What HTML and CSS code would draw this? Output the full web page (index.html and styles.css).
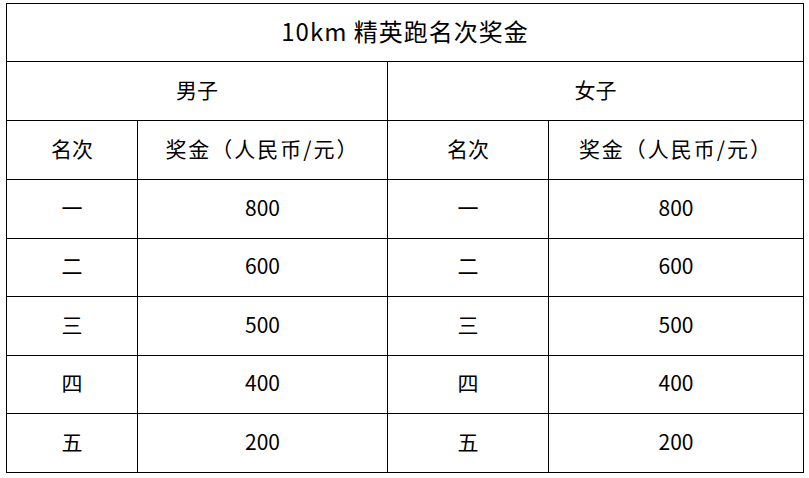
FILE: index.html
```html
<!DOCTYPE html>
<html lang="zh-CN">
<head>
<meta charset="utf-8">
<title>10km 精英跑名次奖金</title>
<link rel="stylesheet" href="styles.css">
</head>
<body>
<div class="page">
<table class="prize">
  <colgroup>
    <col class="c-rank">
    <col class="c-money">
    <col class="c-rank2">
    <col class="c-money2">
  </colgroup>
  <tr class="r58"><td class="title" colspan="4">10km 精英跑名次奖金</td></tr>
  <tr class="r59"><td colspan="2">男子</td><td colspan="2">女子</td></tr>
  <tr class="r59"><td>名次</td><td class="wide">奖金（人民币/元）</td><td>名次</td><td class="wide">奖金（人民币/元）</td></tr>
  <tr class="r59"><td>一</td><td>800</td><td>一</td><td>800</td></tr>
  <tr class="r58"><td>二</td><td>600</td><td>二</td><td>600</td></tr>
  <tr class="r59"><td>三</td><td>500</td><td>三</td><td>500</td></tr>
  <tr class="r58"><td>四</td><td>400</td><td>四</td><td>400</td></tr>
  <tr class="r59"><td>五</td><td>200</td><td>五</td><td>200</td></tr>
</table>
</div>
</body>
</html>
```
FILE: styles.css
```css
html, body {
  margin: 0;
  padding: 0;
  background: #fff;
}
.page {
  padding: 3px 0 0 6px;
}
.prize {
  border-collapse: collapse;
  table-layout: fixed;
  width: 797px;
  font-family: "Noto Sans CJK SC", "Noto Sans", sans-serif;
  font-size: 21px;
  color: #000;
}
.c-rank { width: 131px; }
.c-money { width: 250px; }
.c-rank2 { width: 161px; }
.c-money2 { width: 255px; }
.prize td {
  border: 1px solid #000;
  text-align: center;
  vertical-align: middle;
  padding: 0 0 4px 0;
  line-height: 1;
}
.r58 td { height: 53px; }
.r59 td { height: 54px; }
.prize td.title {
  font-size: 24px;
  letter-spacing: 1px;
}
.prize td.wide {
  letter-spacing: 2px;
}
```
